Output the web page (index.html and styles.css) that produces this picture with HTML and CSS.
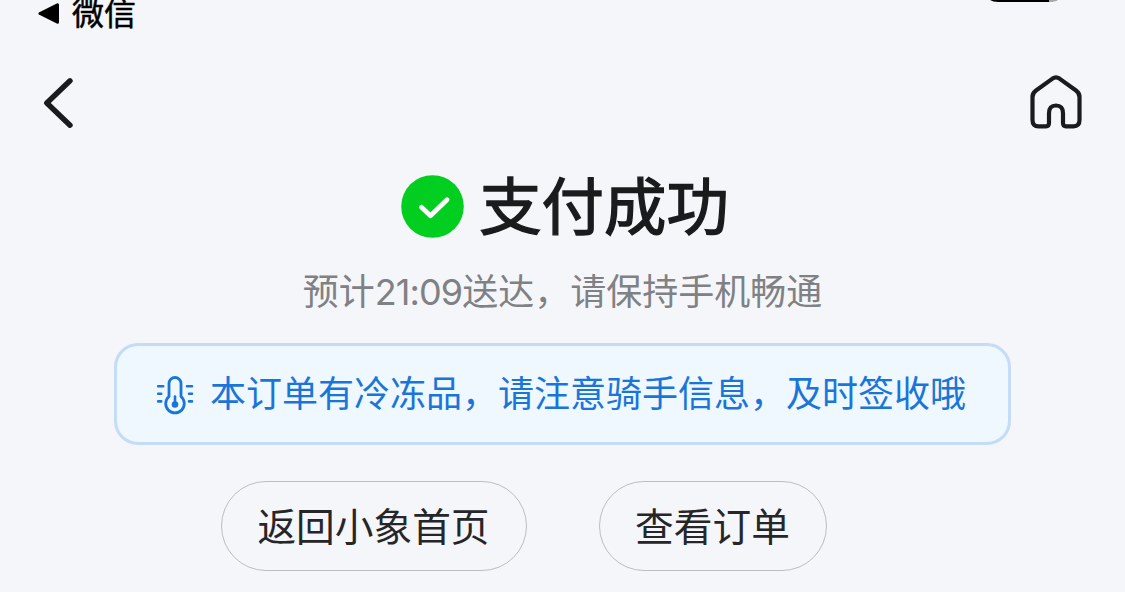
FILE: index.html
```html
<!DOCTYPE html>
<html lang="zh-CN">
<head>
  <meta charset="utf-8">
  <title>支付成功</title>
  <link rel="stylesheet" href="styles.css">
</head>
<body>
  <!-- Status bar -->
  <div class="status-bar">
    <div class="back-app">
      <svg class="back-arrow" width="22" height="22" viewBox="0 0 22 22"><path d="M2 10.500 L19.500 1.800 V19.200 Z" fill="#000" stroke="#000" stroke-width="3" stroke-linejoin="round"/></svg>
      <span class="app-name">微信</span>
    </div>
    <svg class="battery" width="70" height="2" viewBox="0 0 70 2"><path d="M0 0 H59 V2 H8 Q3 2 0 0 Z" fill="#000"/><path d="M59 0 H68 Q65 2 59 2 Z" fill="#a6a7a9"/></svg>
  </div>

  <!-- Navigation -->
  <div class="nav">
    <svg width="34" height="54" viewBox="0 0 34 54"><path d="M28 5.800 L4.800 28 L28 50.200" fill="none" stroke="#1a1b1c" stroke-width="5.400" stroke-linecap="round" stroke-linejoin="round"/></svg>
    <svg width="54" height="56" viewBox="0 0 54 56"><path d="M23.500 4.600 Q27 2.200 30.500 4.600 L47 16.500 Q50.500 19 50.500 23 V46 Q50.500 52.300 44.500 52.300 H37 Q34 52.300 34 49 V39 Q34 31.500 27 31.500 Q20 31.500 20 39 V49 Q20 52.300 17 52.300 H9.500 Q3.500 52.300 3.500 46 V23 Q3.500 19 7 16.500 Z" fill="none" stroke="#1a1b1c" stroke-width="4.200" stroke-linejoin="round"/></svg>
  </div>

  <!-- Payment result -->
  <div class="result">
    <svg width="63" height="63" viewBox="0 0 63 63"><circle cx="31.500" cy="31.500" r="31.300" fill="#02ce20"/><path d="M20.500 32.200 L29.500 40.700 L46 24.700" fill="none" stroke="#fff" stroke-width="4.800" stroke-linecap="round" stroke-linejoin="round"/></svg>
    <h1>支付成功</h1>
  </div>
  <p class="eta">预计<span class="time">21:09</span>送达，请保持手机畅通</p>

  <!-- Frozen goods notice -->
  <div class="notice">
    <svg class="thermometer" width="38" height="40" viewBox="0 0 38 40" fill="none" stroke="#1a75d8" stroke-linecap="round">
      <path d="M13 20.500 V7.500 A6 6 0 0 1 25 7.500 V20.500 A9.300 9.300 0 1 1 13 20.500 Z" stroke-width="2.800" stroke-linejoin="round"/>
      <path d="M19 20.500 V28" stroke-width="2.600"/>
      <circle cx="19" cy="28.500" r="3.300" fill="#1a75d8" stroke="none"/>
      <path d="M2.200 10.200 H7.200 M2.200 17.800 H5.200 M2.200 25.400 H5.200 M31 10.200 H36 M33 17.800 H36 M33 25.400 H36" stroke-width="2.600"/>
    </svg>
    <span class="notice-text">本订单有冷冻品，请注意骑手信息，及时签收哦</span>
  </div>

  <div class="actions">
    <button class="btn">返回小象首页</button>
    <button class="btn">查看订单</button>
  </div>
</body>
</html>
```
FILE: styles.css
```css
* { box-sizing: border-box; }

body {
  margin: 0;
  height: 592px;
  overflow: hidden;
  background: #f5f6fa;
  color: #1a1b1c;
  font-family: "Noto Sans CJK SC", sans-serif;
}

svg { display: block; flex: none; }

/* Status bar */
.status-bar {
  display: flex;
  justify-content: space-between;
  align-items: flex-start;
  height: 28px;
  padding: 0 65px 0 38px;
}
.back-app {
  display: flex;
  align-items: center;
  gap: 12px;
  height: 28px;
  color: #000;
  font-size: 32px;
  line-height: 28px;
  -webkit-text-stroke: 0.5px #000;
}
.app-name { margin-bottom: 6px; }

/* Navigation */
.nav {
  display: flex;
  justify-content: space-between;
  align-items: center;
  height: 147px;
  padding: 1px 42px 0 42px;
}

/* Payment result */
.result {
  display: flex;
  justify-content: center;
  align-items: center;
  gap: 15px;
  height: 63px;
  padding-left: 5px;
}
.result h1 {
  margin: 0 0 7px;
  font-size: 62.4px;
  font-weight: 400;
  line-height: 56px;
  -webkit-text-stroke: 1.4px #1a1b1c;
}
.eta {
  margin: 29px 0 0;
  color: #808184;
  font-size: 36px;
  line-height: 44px;
  text-align: center;
}
.time {
  font-family: Inter, sans-serif;
  letter-spacing: -0.9px;
}

/* Notice */
.notice {
  display: flex;
  align-items: center;
  gap: 16px;
  width: 897px;
  height: 102px;
  margin: 29px 0 0 114px;
  padding-left: 39px;
  border: 3px solid #c4dcf7;
  border-radius: 24px;
  background: #eff7ff;
  color: #1a75d8;
  font-size: 36px;
  line-height: 44px;
}
.thermometer { margin-top: 3px; }
.notice-text { margin-bottom: 7px; }

/* Buttons */
.actions {
  display: flex;
  gap: 72px;
  margin: 36px 0 0 221px;
}
.btn {
  height: 90px;
  padding: 0 36.2px 4px 35.4px;
  border: 1px solid #bcbdc1;
  border-radius: 45px;
  background: none;
  color: #262629;
  font-family: inherit;
  font-size: 38.7px;
  line-height: 44px;
}
```
